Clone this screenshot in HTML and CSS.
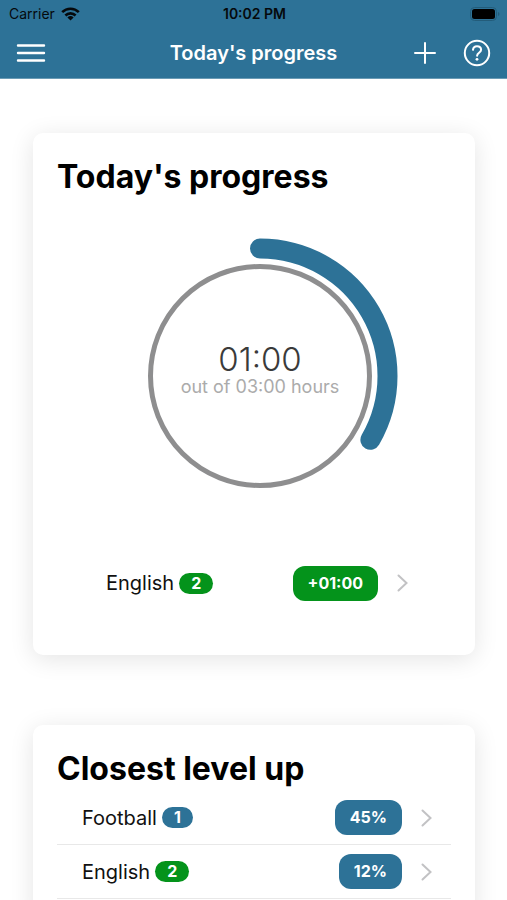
FILE: index.html
```html
<!DOCTYPE html>
<html lang="en">
<head>
<meta charset="utf-8">
<meta name="viewport" content="width=device-width, initial-scale=1">
<title>Today's progress</title>
<link rel="stylesheet" href="styles.css">
</head>
<body>
<header class="header">
  <div class="status">
    <div class="carrier">Carrier
      <svg width="19" height="14" viewBox="0 0 19 14" aria-hidden="true">
        <g fill="none" stroke="#05090c" stroke-width="2.6">
          <path d="M1.2 5.2a11.8 11.8 0 0 1 16.6 0"/>
          <path d="M4.4 8.5a7.2 7.2 0 0 1 10.2 0"/>
        </g>
        <path d="M9.5 13.6 6.4 10.4a4.5 4.5 0 0 1 6.2 0z" fill="#05090c"/>
      </svg>
    </div>
    <time class="clock">10:02 PM</time>
    <svg class="battery" width="30" height="14" viewBox="0 0 30 14" aria-hidden="true">
      <rect x="0.5" y="0.5" width="26" height="13" rx="4" fill="none" stroke="#235c7a"/>
      <rect x="2" y="2" width="23" height="10" rx="2.5" fill="#000"/>
      <path d="M28 5v4q1.500-.6 1.500-2T28 5z" fill="#235c7a"/>
    </svg>
  </div>
  <nav class="navbar">
    <div class="side">
      <button class="icon" type="button" aria-label="Menu">
        <svg width="30" height="20" viewBox="0 0 30 20"><path d="M2 2.500h26M2 10h26M2 17.500h26" stroke="#fff" stroke-width="2.400" stroke-linecap="round"/></svg>
      </button>
    </div>
    <h1 class="title">Today's progress</h1>
    <div class="side side-end">
      <button class="icon" type="button" aria-label="Add">
        <svg width="22" height="22" viewBox="0 0 22 22"><path d="M11 1v20M1 11h20" stroke="#fff" stroke-width="2" stroke-linecap="round"/></svg>
      </button>
      <button class="icon" type="button" aria-label="Help">
        <svg width="28" height="28" viewBox="0 0 28 28" fill="none" stroke="#fff" stroke-width="2" stroke-linecap="round"><circle cx="14" cy="14" r="12.200"/><path d="M10 10.800c.2-2.400 1.900-3.600 4-3.600 2.300 0 4.100 1.400 4.100 3.500 0 3-4 3.200-4 6.100"/><circle cx="14" cy="20.300" r="1.400" fill="#fff" stroke="none"/></svg>
      </button>
    </div>
  </nav>
</header>
<main class="content">
  <section class="card">
    <h2 class="heading">Today's progress</h2>
    <div class="gauge">
      <svg class="ring" viewBox="0 0 394 264" fill="none" aria-hidden="true">
        <circle cx="203" cy="140" r="109.500" stroke="#8e8e8f" stroke-width="5"/>
        <path d="M203 12.500a127.500 127.500 0 0 1 110.400 191.300" stroke="#2d7297" stroke-width="20" stroke-linecap="round"/>
      </svg>
      <div class="reading">
        <div class="elapsed">01:00</div>
        <div class="goal">out of 03:00 hours</div>
      </div>
    </div>
    <ul class="list list-inset">
      <li><a class="row" href="#english">
        <span>English</span><span class="level green">2</span>
        <span class="value green">+01:00</span>
        <svg class="chevron" width="11" height="18" viewBox="0 0 11 18"><path d="m1.500 1.500 8 7.500-8 7.500"/></svg>
      </a></li>
    </ul>
  </section>
  <section class="card">
    <h2 class="heading">Closest level up</h2>
    <ul class="list">
      <li><a class="row" href="#football">
        <span>Football</span><span class="level">1</span>
        <span class="value">45%</span>
        <svg class="chevron" width="11" height="18" viewBox="0 0 11 18"><path d="m1.500 1.500 8 7.500-8 7.500"/></svg>
      </a></li>
      <li><a class="row" href="#english">
        <span>English</span><span class="level green">2</span>
        <span class="value">12%</span>
        <svg class="chevron" width="11" height="18" viewBox="0 0 11 18"><path d="m1.500 1.500 8 7.500-8 7.500"/></svg>
      </a></li>
    </ul>
  </section>
</main>
</body>
</html>
```
FILE: styles.css
```css
* { box-sizing: border-box; }
body {
  margin: 0;
  height: 100vh;
  overflow: hidden;
  display: flex;
  flex-direction: column;
  background: #fff;
  color: #111;
  font-family: Inter, "Liberation Sans", sans-serif;
}
svg { display: block; flex: none; }
.header {
  background: #2d7297;
  border-bottom: 1px solid #6a9bb5;
  flex: none;
}
.status {
  display: grid;
  grid-template-columns: 1fr auto 1fr;
  align-items: center;
  height: 27px;
  padding: 0 7px 0 9px;
  font-size: 14px;
  color: #05090c;
}
.carrier { display: flex; align-items: center; gap: 6px; }
.clock { font-weight: 600; }
.battery { justify-self: end; }
.navbar {
  display: grid;
  grid-template-columns: 1fr auto 1fr;
  align-items: center;
  height: 51px;
  padding: 0 16px;
  color: #fff;
}
.side { display: flex; align-items: center; }
.side-end { justify-content: flex-end; gap: 27px; }
.icon { padding: 0; border: 0; background: none; cursor: pointer; }
.title { margin: 0; font-size: 20px; font-weight: 600; }
.content {
  flex: 1;
  min-height: 0;
  overflow: hidden;
  padding: 54px 32px 0 33px;
}
.card {
  padding: 23px 24px 24px;
  margin-bottom: 70px;
  border-radius: 10px;
  background: #fff;
  box-shadow: 0 4px 24px rgba(0, 0, 0, 0.11);
}
.heading {
  margin: 0;
  font-size: 32px;
  line-height: 42px;
  font-weight: 700;
  color: #000;
}
.gauge { display: grid; margin: 38px 0 56px; }
.gauge > * { grid-area: 1 / 1; }
.ring { width: 100%; }
.reading {
  align-self: center;
  padding: 3px 0 0 12px;
  text-align: center;
}
.elapsed { font-size: 33px; line-height: 34px; color: #3a3a3a; font-weight: 300; }
.goal { font-size: 18px; line-height: 22px; color: #ababab; }
.list { margin: 1px 0 0; padding: 0; list-style: none; }
.list li { border-bottom: 1px solid #e8e8e8; }
.list-inset { padding: 0 24px 21px; }
.list-inset li { border-bottom: 0; }
.row {
  display: flex;
  align-items: center;
  height: 53px;
  padding: 0 19px 0 25px;
  font-size: 20px;
  color: inherit;
  text-decoration: none;
}
.list-inset .row { height: 54px; }
.level, .value {
  background: #2d7297;
  color: #fff;
  font-weight: 700;
  text-align: center;
}
.level {
  margin-left: 5px;
  padding: 0 12px;
  border-radius: 11px;
  font-size: 16px;
  line-height: 21px;
}
.value {
  margin-left: auto;
  padding: 0 15px;
  border-radius: 12px;
  font-size: 16px;
  line-height: 35px;
}
.green { background: #04931b; }
.chevron {
  margin-left: 19px;
  fill: none;
  stroke: #c2c2c4;
  stroke-width: 2;
  stroke-linecap: round;
}
```
